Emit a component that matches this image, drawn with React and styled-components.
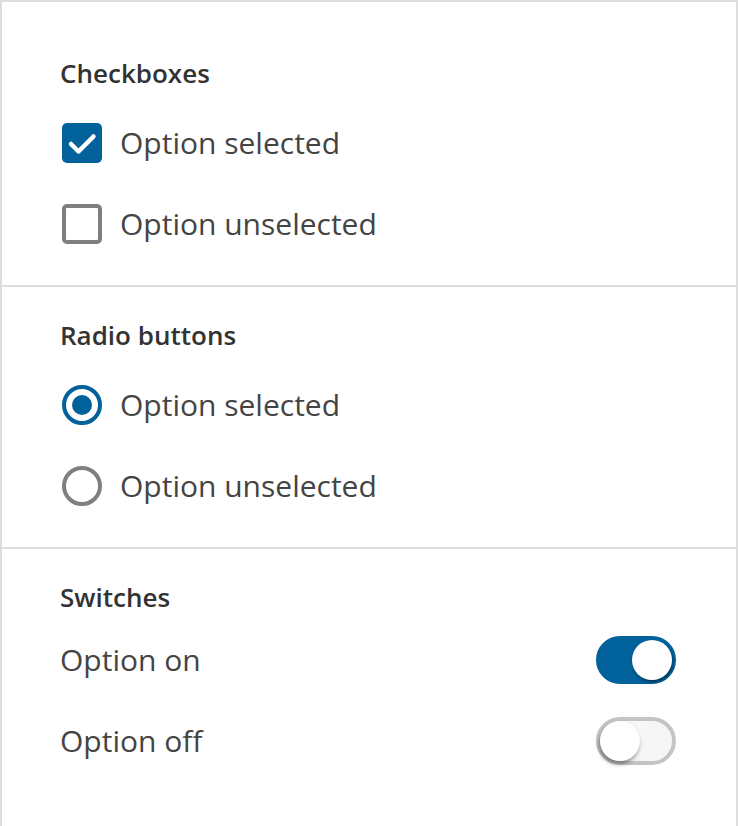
import styled, { createGlobalStyle } from 'styled-components';

const GlobalStyle = createGlobalStyle`
  html, body {
    margin: 0;
    padding: 0;
    background: #fff;
  }
  body {
    font-family: "Open Sans", "Noto Sans", sans-serif;
    color: #444;
  }
`;

const BLUE = '#00619b';
const GRAY = '#7f7f7f';
const LINE = '#dddddd';

const Panel = styled.div`
  box-sizing: border-box;
  min-height: 100vh;
  padding-top: 23px;
  border: 2px solid ${LINE};
  border-bottom: none;
`;

const Section = styled.section`
  padding: 33px 60px 21px 58px;
  border-bottom: 2px solid ${LINE};

  &:last-child {
    border-bottom: none;
  }
`;

const Heading = styled.h2`
  margin: 0;
  font-size: 26px;
  font-weight: 600;
  line-height: 30px;
  color: #333;
`;

const List = styled.div`
  display: flex;
  flex-direction: column;
  margin-top: ${p => p.$gap}px;
`;

const Row = styled.label`
  display: flex;
  align-items: center;
  justify-content: ${p => (p.$spread ? 'space-between' : 'flex-start')};
  gap: 18px;
  height: 81px;
  font-size: 30px;
  line-height: 40px;
  color: #444;
  cursor: pointer;
`;

const Box = styled.span`
  box-sizing: border-box;
  flex: none;
  display: flex;
  align-items: center;
  justify-content: center;
  width: 40px;
  height: 40px;
  margin-left: 2px;
  border-radius: 5px;
  background: ${p => (p.$checked ? BLUE : '#fff')};
  border: ${p => (p.$checked ? 'none' : `4px solid ${GRAY}`)};
`;

const Radio = styled.span`
  box-sizing: border-box;
  flex: none;
  display: flex;
  align-items: center;
  justify-content: center;
  width: 40px;
  height: 40px;
  margin-left: 2px;
  border-radius: 50%;
  border: 4px solid ${p => (p.$checked ? BLUE : GRAY)};

  &::after {
    content: '';
    display: ${p => (p.$checked ? 'block' : 'none')};
    width: 20px;
    height: 20px;
    border-radius: 50%;
    background: ${BLUE};
  }
`;

const Track = styled.span`
  box-sizing: border-box;
  position: relative;
  flex: none;
  width: 80px;
  height: 48px;
  border-radius: 24px;
  border: 4px solid ${p => (p.$on ? BLUE : '#c4c4c4')};
  background: ${p => (p.$on ? BLUE : '#f6f6f6')};
`;

const Knob = styled.span`
  position: absolute;
  top: 0;
  left: ${p => (p.$on ? '32px' : '0')};
  width: 40px;
  height: 40px;
  border-radius: 50%;
  background: #fff;
  box-shadow: ${p =>
    p.$on ? '1px 2px 3px rgba(0, 0, 0, 0.45)' : '-1px 3px 4px rgba(0, 0, 0, 0.4)'};
`;

function Check() {
  return (
    <svg width="40" height="40" viewBox="0 0 40 40" fill="none">
      <path
        d="M9 21 L16.5 28.5 L31.5 13.5"
        stroke="#fff"
        strokeWidth="4.5"
        strokeLinecap="round"
        strokeLinejoin="round"
      />
    </svg>
  );
}

export default function App() {
  return (
    <>
      <GlobalStyle />
      <Panel>
        <Section>
          <Heading>Checkboxes</Heading>
          <List $gap={14}>
            <Row>
              <Box $checked>
                <Check />
              </Box>
              Option selected
            </Row>
            <Row>
              <Box />
              Option unselected
            </Row>
          </List>
        </Section>

        <Section>
          <Heading>Radio buttons</Heading>
          <List $gap={14}>
            <Row>
              <Radio $checked />
              Option selected
            </Row>
            <Row>
              <Radio />
              Option unselected
            </Row>
          </List>
        </Section>

        <Section>
          <Heading>Switches</Heading>
          <List $gap={7}>
            <Row $spread>
              Option on
              <Track $on>
                <Knob $on />
              </Track>
            </Row>
            <Row $spread>
              Option off
              <Track>
                <Knob />
              </Track>
            </Row>
          </List>
        </Section>
      </Panel>
    </>
  );
}
